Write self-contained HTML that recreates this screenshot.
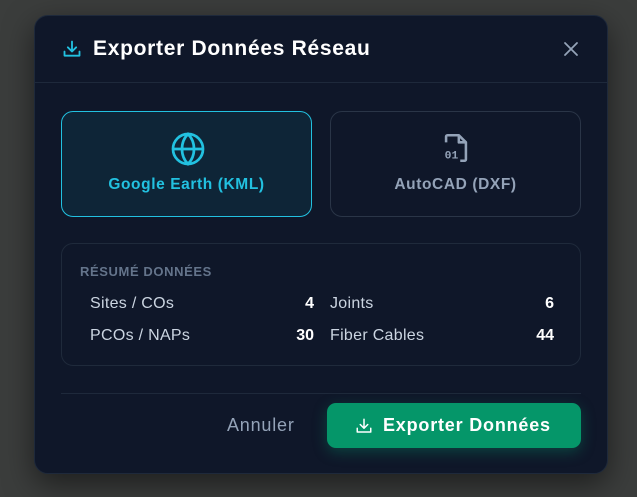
<!DOCTYPE html>
<html><head><meta charset="utf-8"><style>
*{box-sizing:border-box;margin:0;padding:0}
body{width:637px;height:497px;background:#3b3d3c;font-family:"Liberation Sans",sans-serif;position:relative;overflow:hidden}
.m{position:absolute;left:34px;top:15px;width:574px;height:459px;background:#0f1729;border-radius:14px;border:1px solid #1e293b;box-shadow:0 10px 30px rgba(0,0,0,.5)}
.a{position:absolute}
.t{left:58px;top:21px;font-size:21px;font-weight:bold;color:#fff;letter-spacing:.7px}
.hd{left:0;right:0;top:66px;height:1px;background:#1e293b}
.card{top:95px;width:251px;height:106px;border-radius:12px;text-align:center}
.c1{left:26px;background:#0e2537;border:1px solid #22c1e0}
.c2{left:295px;border:1px solid #2a3547}
.card .l{position:absolute;left:0;right:0;top:64px;font-size:15.5px;font-weight:bold;letter-spacing:.6px}
.sum{left:26px;top:227px;width:520px;height:123px;border:1px solid #1f2a3b;border-radius:12px}
.sh{left:18px;top:20px;font-size:13px;font-weight:bold;color:#64748b;letter-spacing:.6px}
.r{font-size:16px;color:#cbd5e1;letter-spacing:.3px}
.v{font-size:16px;font-weight:bold;color:#fff;text-align:right}
.dv{left:26px;width:520px;top:377px;height:1px;background:#1e293b}
.btn{left:292px;top:387px;width:254px;height:45px;background:#059669;border-radius:9px;color:#fff;font-size:18px;font-weight:bold;letter-spacing:.8px;box-shadow:0 4px 14px rgba(5,150,105,.35)}
</style></head><body>
<div class="m">
<svg class="a" style="left:27px;top:23px" width="20" height="20" viewBox="0 0 24 24" fill="none" stroke="#22c1e0" stroke-width="2.2" stroke-linecap="round" stroke-linejoin="round"><path d="M12 3v12M7 10l5 5 5-5M3 15v5h18v-5"/></svg>
<div class="a t">Exporter Données Réseau</div>
<svg class="a" style="left:528px;top:25px" width="16" height="16" viewBox="0 0 16 16" stroke="#94a3b8" stroke-width="1.8" stroke-linecap="round"><path d="M2 2l12 12M14 2L2 14"/></svg>
<div class="a hd"></div>
<div class="a card c1">
<svg style="position:absolute;left:108px;top:19px" width="36" height="36" viewBox="0 0 24 24" fill="none" stroke="#22c1e0" stroke-width="1.8"><circle cx="12" cy="12" r="10"/><path d="M2 12h20M12 2c3 3 4 6.5 4 10s-1 7-4 10c-3-3-4-6.5-4-10s1-7 4-10z"/></svg>
<div class="l" style="color:#22c1e0">Google Earth (KML)</div></div>
<div class="a card c2">
<svg style="position:absolute;left:108px;top:19px" width="34" height="34" viewBox="0 0 24 24" fill="none" stroke="#94a3b8" stroke-width="1.8" stroke-linejoin="round"><path d="M5 8V4a1 1 0 011-1h8l5 5v12a1 1 0 01-1 1h-3"/><path d="M14 3v5h5"/><text x="4" y="19.5" font-family="Liberation Mono" font-size="8" font-weight="bold" fill="#94a3b8" stroke="none">01</text></svg>
<div class="l" style="color:#94a3b8">AutoCAD (DXF)</div></div>
<div class="a sum">
<div class="a sh">RÉSUMÉ DONNÉES</div>
<div class="a r" style="left:28px;top:51px">Sites / COs</div><div class="a v" style="left:200px;width:52px;top:51px">4</div>
<div class="a r" style="left:268px;top:51px">Joints</div><div class="a v" style="left:440px;width:52px;top:51px">6</div>
<div class="a r" style="left:28px;top:83px">PCOs / NAPs</div><div class="a v" style="left:200px;width:52px;top:83px">30</div>
<div class="a r" style="left:268px;top:83px">Fiber Cables</div><div class="a v" style="left:440px;width:52px;top:83px">44</div>
</div>
<div class="a dv"></div>
<div class="a" style="left:192px;top:399px;font-size:18px;color:#94a3b8;letter-spacing:.8px">Annuler</div>
<div class="a btn">
<svg style="position:absolute;left:28px;top:14px" width="18" height="18" viewBox="0 0 24 24" fill="none" stroke="#fff" stroke-width="2" stroke-linecap="round" stroke-linejoin="round"><path d="M12 3v12M7 10l5 5 5-5M3 15v5h18v-5"/></svg>
<div style="position:absolute;left:56px;top:12px">Exporter Données</div></div>
</div>
</body></html>
